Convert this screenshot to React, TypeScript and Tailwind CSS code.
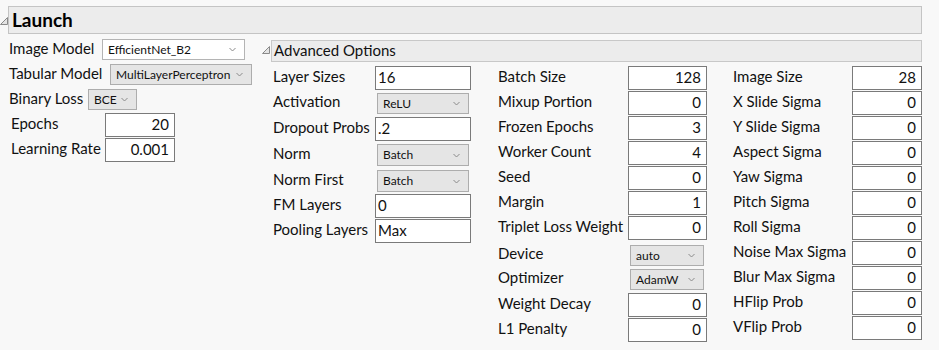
import React from "react";

const Tri = ({ className = "" }: { className?: string }) => (
  <svg width="8" height="8" viewBox="0 0 8 8" className={className}>
    <polygon points="7.5,0.5 7.5,7.5 0.5,7.5" fill="#e4e4e4" stroke="#8a8a8a" strokeWidth="1" />
  </svg>
);

const Chevron = () => (
  <svg width="7" height="5" viewBox="0 0 7 5" className="shrink-0">
    <polyline points="0.5,1 3.5,4 6.5,1" fill="none" stroke="#8a8a8a" strokeWidth="1" />
  </svg>
);

const Select = ({
  value,
  w,
  h = "h-[21px]",
  white = false,
  extra = "",
}: {
  value: string;
  w: string;
  h?: string;
  white?: boolean;
  extra?: string;
}) => (
  <div
    className={`${w} ${h} ${extra} shrink-0 flex items-center justify-between border ${
      white ? "bg-white border-[#b4b4b4]" : "bg-[#e5e5e5] border-[#adadad]"
    } pl-[5px] pr-[8px] text-[12px] text-[#111] leading-none`}
  >
    <span className="whitespace-nowrap">{value}</span>
    <Chevron />
  </div>
);

const Input = ({ value, w, left = false }: { value: string; w: string; left?: boolean }) => (
  <div
    className={`${w} h-[24px] shrink-0 flex items-center bg-white border border-[#7a7a7a] text-[15px] text-[#111] leading-none pb-[2px] ${
      left ? "justify-start pl-[2px]" : "justify-end pr-[5px]"
    }`}
  >
    {value}
  </div>
);

type Row = { label: string; kind: "in" | "inL" | "sel"; value: string; mt: string; h: string };

const col1: Row[] = [
  { label: "Layer Sizes", kind: "inL", value: "16", mt: "mt-[4px]", h: "h-[24px]" },
  { label: "Activation", kind: "sel", value: "ReLU", mt: "mt-[3px]", h: "h-[21px]" },
  { label: "Dropout Probs", kind: "inL", value: ".2", mt: "mt-[3px]", h: "h-[24px]" },
  { label: "Norm", kind: "sel", value: "Batch", mt: "mt-[3px]", h: "h-[22px]" },
  { label: "Norm First", kind: "sel", value: "Batch", mt: "mt-[4px]", h: "h-[22px]" },
  { label: "FM Layers", kind: "inL", value: "0", mt: "mt-[2px]", h: "h-[24px]" },
  { label: "Pooling Layers", kind: "inL", value: "Max", mt: "mt-[1px]", h: "h-[24px]" },
];

const col2: Row[] = [
  { label: "Batch Size", kind: "in", value: "128", mt: "mt-[4px]", h: "h-[24px]" },
  { label: "Mixup Portion", kind: "in", value: "0", mt: "mt-[1px]", h: "h-[24px]" },
  { label: "Frozen Epochs", kind: "in", value: "3", mt: "mt-[1px]", h: "h-[24px]" },
  { label: "Worker Count", kind: "in", value: "4", mt: "mt-[1px]", h: "h-[24px]" },
  { label: "Seed", kind: "in", value: "0", mt: "mt-[1px]", h: "h-[24px]" },
  { label: "Margin", kind: "in", value: "1", mt: "mt-[1px]", h: "h-[24px]" },
  { label: "Triplet Loss Weight", kind: "in", value: "0", mt: "mt-[1px]", h: "h-[24px]" },
  { label: "Device", kind: "sel", value: "auto", mt: "mt-[5px]", h: "h-[21px]" },
  { label: "Optimizer", kind: "sel", value: "AdamW", mt: "mt-[3px]", h: "h-[21px]" },
  { label: "Weight Decay", kind: "in", value: "0", mt: "mt-[3px]", h: "h-[24px]" },
  { label: "L1 Penalty", kind: "in", value: "0", mt: "mt-[1px]", h: "h-[24px]" },
];

const col3Labels: [string, string][] = [
  ["Image Size", "28"],
  ["X Slide Sigma", "0"],
  ["Y Slide Sigma", "0"],
  ["Aspect Sigma", "0"],
  ["Yaw Sigma", "0"],
  ["Pitch Sigma", "0"],
  ["Roll Sigma", "0"],
  ["Noise Max Sigma", "0"],
  ["Blur Max Sigma", "0"],
  ["HFlip Prob", "0"],
  ["VFlip Prob", "0"],
];

export default function App() {
  return (
    <div className="w-[939px] h-[350px] overflow-hidden bg-[#f8f8f8] text-[#111] font-['Lato','Segoe_UI',sans-serif]">
      {/* Launch header */}
      <div className="flex pt-[6px]">
        <Tri className="mt-[11px]" />
        <div className="w-[914px] h-[28px] bg-[#ececec] border border-[#c4c4c4] flex items-center pl-[3px] pb-[2px]">
          <span className="text-[19px] font-bold leading-none text-[#000]">Launch</span>
        </div>
      </div>

      <div className="flex">
        {/* Left column */}
        <div className="w-[262px] shrink-0 flex flex-col text-[15px]">
          <div className="flex items-center h-[21px] mt-[5px] pl-[9px]">
            <span className="w-[93px] shrink-0 pb-[3px]">Image Model</span>
            <Select value="EfficientNet_B2" w="w-[143px]" white />
          </div>
          <div className="flex items-center h-[21px] mt-[4px] pl-[9px]">
            <span className="w-[101px] shrink-0 pb-[3px]">Tabular Model</span>
            <Select value="MultiLayerPerceptron" w="w-[142px]" />
          </div>
          <div className="flex items-center h-[21px] mt-[4px] pl-[9px]">
            <span className="w-[79px] shrink-0 pb-[3px]">Binary Loss</span>
            <Select value="BCE" w="w-[49px]" />
          </div>
          <div className="flex items-center h-[24px] mt-[3px] pl-[11px]">
            <span className="w-[94px] shrink-0 pb-[4px]">Epochs</span>
            <Input value="20" w="w-[70px]" />
          </div>
          <div className="flex items-center h-[24px] mt-[1px] pl-[11px]">
            <span className="w-[94px] shrink-0 pb-[4px]">Learning Rate</span>
            <Input value="0.001" w="w-[70px]" />
          </div>
        </div>

        {/* Advanced options */}
        <div className="flex flex-col mt-[6px]">
          <div className="flex">
            <Tri className="mt-[6px] mr-px" />
            <div className="w-[651px] h-[22px] bg-[#ececec] border border-[#c8c8c8] flex items-center pl-[2px] pb-[1px]">
              <span className="text-[15px] leading-none">Advanced Options</span>
            </div>
          </div>
          <div className="flex text-[15px] pl-[11px]">
            {/* col1 */}
            <div className="w-[225px] shrink-0 flex flex-col">
              {col1.map((r) => (
                <div key={r.label} className={`flex items-center ${r.h} ${r.mt}`}>
                  <span className="w-[102px] shrink-0 whitespace-nowrap pb-[4px]">{r.label}</span>
                  {r.kind === "sel" ? (
                    <Select value={r.value} w="w-[92px]" h={r.h} extra="ml-[2px]" />
                  ) : (
                    <Input value={r.value} w="w-[96px]" left={r.kind === "inL"} />
                  )}
                </div>
              ))}
            </div>
            {/* col2 */}
            <div className="w-[235px] shrink-0 flex flex-col">
              {col2.map((r) => (
                <div key={r.label} className={`flex items-center ${r.h} ${r.mt}`}>
                  <span className="w-[130px] shrink-0 whitespace-nowrap pb-[4px]">{r.label}</span>
                  {r.kind === "sel" ? (
                    <Select value={r.value} w="w-[74px]" h={r.h} extra="ml-[2px]" />
                  ) : (
                    <Input value={r.value} w="w-[79px]" />
                  )}
                </div>
              ))}
            </div>
            {/* col3 */}
            <div className="flex flex-col pt-[3px]">
              {col3Labels.map(([l, v]) => (
                <div key={l} className="flex items-center h-[24px] mt-[1px]">
                  <span className="w-[119px] shrink-0 whitespace-nowrap pb-[4px]">{l}</span>
                  <Input value={v} w="w-[70px]" />
                </div>
              ))}
            </div>
          </div>
        </div>
      </div>
    </div>
  );
}
